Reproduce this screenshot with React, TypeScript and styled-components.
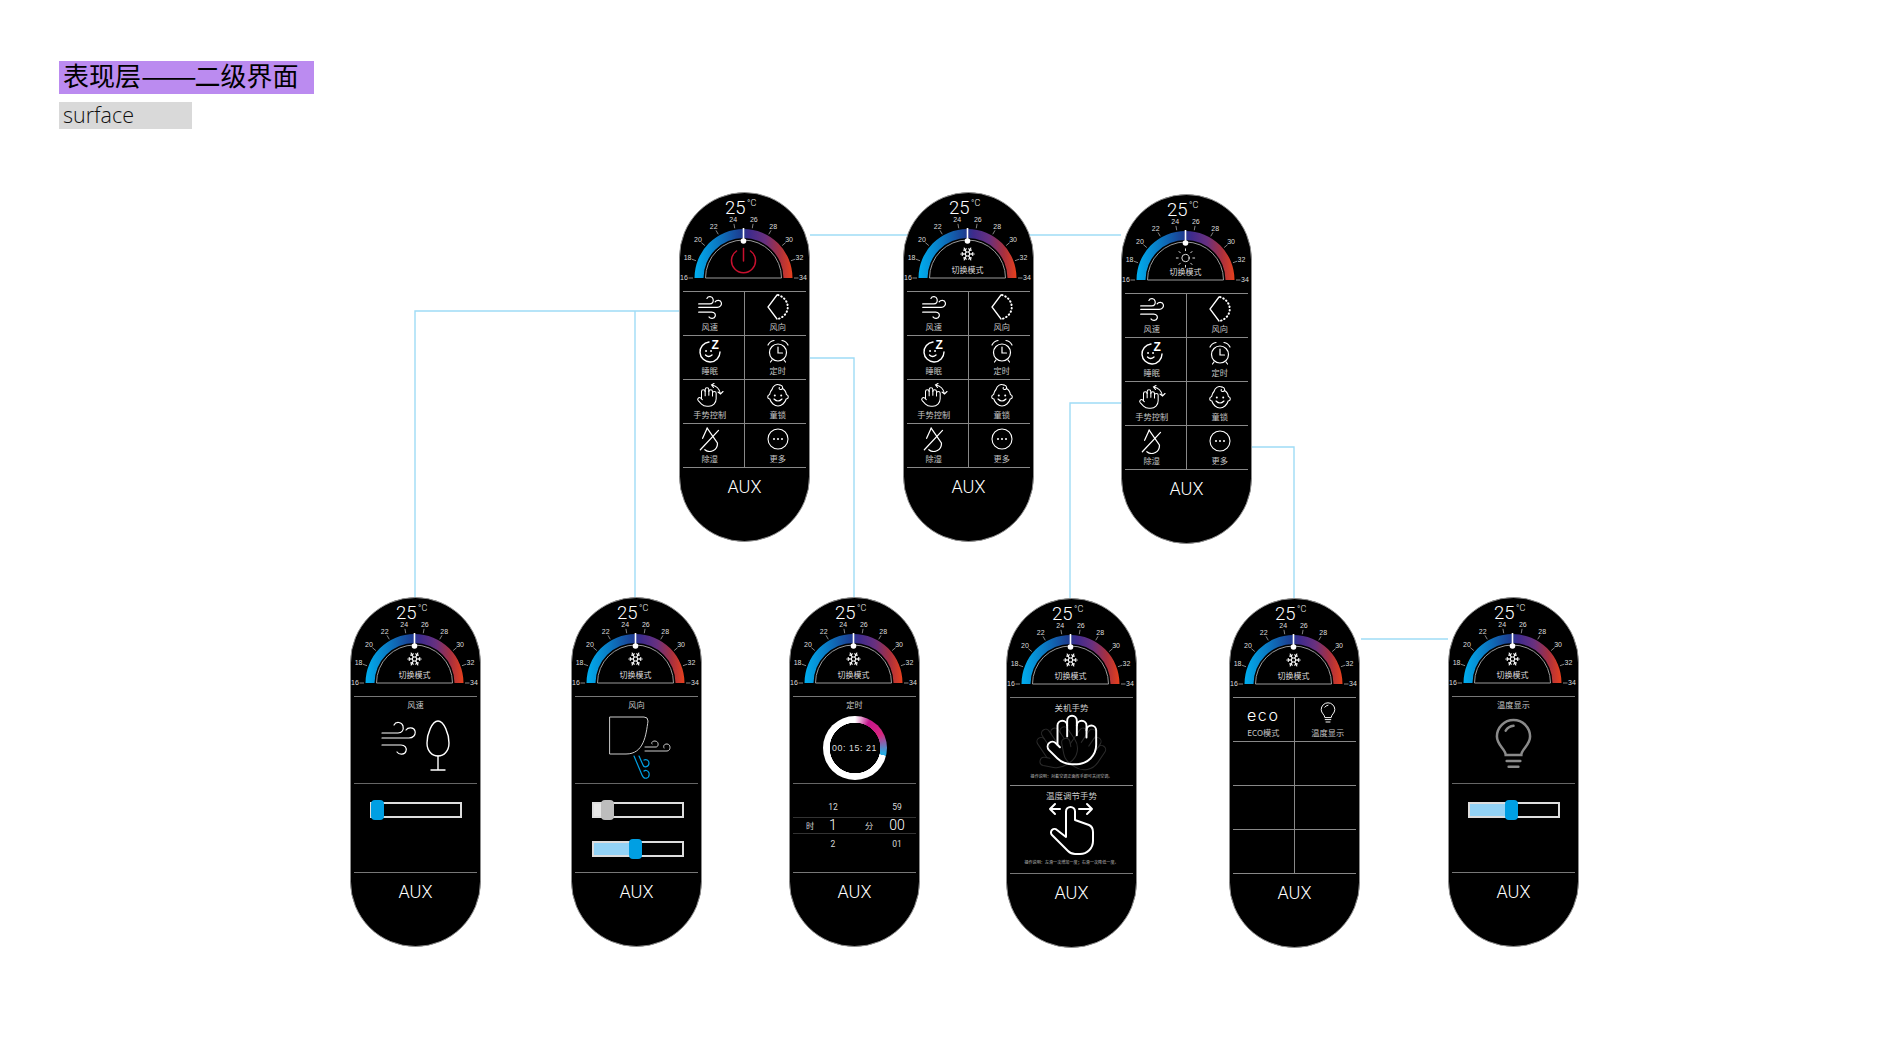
import { FC, ReactNode, useId } from 'react'
import styled, { createGlobalStyle } from 'styled-components'
import { Hand, Snowflake, Sun } from 'lucide-react'

const CJK = `"Noto Sans CJK SC", "Noto Sans", sans-serif`
const HEADER_BOTTOM = 129

const toPolar = (r: number, deg: number) => {
  const rad = (deg * Math.PI) / 180
  return [63.5 + r * Math.cos(rad), 85 - r * Math.sin(rad)]
}

const GaugeCenter: FC<{ mode: 'power' | 'cool' | 'sun' }> = ({ mode }) => {
  if (mode === 'power') {
    return (
      <g fill="none" stroke="#c8102e" strokeWidth="1.5" strokeLinecap="round">
        <path d="M56.5 58 A12 12 0 1 0 70.5 58" />
        <path d="M63.5 55.5 V68" />
      </g>
    )
  }
  return (
    <>
      {mode === 'cool' ? (
        <Snowflake x={55.5} y={53} size={16} color="#fff" strokeWidth={1.7} />
      ) : (
        <Sun x={52.5} y={52} size={22} color="#eee" strokeWidth={1} />
      )}
      <text x="63.5" y="80" textAnchor="middle" fontSize="8" fill="#ddd" fontFamily={CJK}>切换模式</text>
    </>
  )
}

const Gauge: FC<{ mode?: 'power' | 'cool' | 'sun' }> = ({ mode = 'cool' }) => {
  const id = useId()
  const labels = [16, 18, 20, 22, 24, 26, 28, 30, 32, 34]
  return (
    <GaugeSvg viewBox="0 0 129 98">
      <defs>
        <linearGradient id={id} gradientUnits="userSpaceOnUse" x1="14.5" x2="112.5" y1="0" y2="0">
          <stop offset="0" stopColor="#00aeef" />
          <stop offset="0.24" stopColor="#0b78c2" />
          <stop offset="0.47" stopColor="#1c3f92" />
          <stop offset="0.56" stopColor="#3f2b8c" />
          <stop offset="0.72" stopColor="#68307f" />
          <stop offset="0.87" stopColor="#a8303f" />
          <stop offset="1" stopColor="#e8401c" />
        </linearGradient>
      </defs>
      <text x="45" y="20.5" fontSize="18.5" fontWeight="300" fill="#fff" fontFamily="Roboto, sans-serif">25</text>
      <text x="67" y="13" fontSize="9" fontWeight="300" fill="#eee" fontFamily="Roboto, sans-serif">°C</text>
      {labels.map((value, i) => {
        const deg = 180 - i * 20
        const [x1, y1] = toPolar(50.5, deg)
        const [x2, y2] = toPolar(55, deg)
        const [tx, ty] = toPolar(59.5, deg)
        return (
          <g key={value}>
            <line x1={x1} y1={y1} x2={x2} y2={y2} stroke="#bbb" strokeWidth="0.7" />
            <text x={tx} y={ty + 2.4} textAnchor="middle" fontSize="7" fill="#ddd" fontFamily={`"Liberation Sans", sans-serif`}>{value}</text>
          </g>
        )
      })}
      <path d="M14.5 85 A49 49 0 0 1 112.5 85 L103.5 85 A40 40 0 0 0 23.5 85 Z" fill={`url(#${id})`} />
      <path d="M25.5 85 A38 38 0 0 1 101.5 85 Z" fill="none" stroke="#aaa" strokeWidth="0.9" />
      <line x1="63.5" y1="35" x2="63.5" y2="48" stroke="#fff" strokeWidth="1.6" />
      <circle cx="63.5" cy="48" r="2.8" fill="#fff" />
      <GaugeCenter mode={mode} />
    </GaugeSvg>
  )
}

const WindIcon: FC<{ width?: number }> = ({ width = 24 }) => (
  <svg width={width} viewBox="0 0 35 36" fill="none" stroke="#fff" strokeWidth={(35 / width) * 1.2} strokeLinecap="round">
    <path d="M1 13 H17 C21 13 23 10 22 6 C21 2 15 1 13 5" />
    <path d="M1 18 H28 C32 18 35 15 34 11 C33 7 27 7 25 10" />
    <path d="M1 25 H20 C24 25 26 28 25 31 C24 35 18 35 16 32" />
  </svg>
)

const DirectionIcon = () => (
  <svg width="24" height="26" viewBox="0 0 24 26" fill="none" stroke="#fff" strokeWidth="1.3" strokeLinecap="round">
    <path d="M11 1 L2 13 L11 25" />
    <path d="M12 1 C25 5 25 21 12 25" strokeDasharray="0.5 3" strokeWidth="2" />
  </svg>
)

const SleepIcon = () => (
  <svg width="24" height="24" viewBox="0 0 24 24" fill="none" stroke="#fff" strokeWidth="1.4" strokeLinecap="round">
    <path d="M11 3 A10 10 0 1 0 22 13" />
    <path d="M8 12 h0.1 M13 12 h0.1" strokeWidth="1.8" />
    <path d="M7.5 16 Q10.5 19 14 16" />
    <text x="13.5" y="10" fontSize="12" fontWeight="700" fill="#fff" stroke="none" fontFamily={`"Liberation Sans", sans-serif`}>Z</text>
  </svg>
)

const AlarmIcon = () => (
  <svg width="24" height="24" viewBox="0 0 24 24" fill="none" stroke="#fff" strokeWidth="1.2" strokeLinecap="round">
    <circle cx="12" cy="13.5" r="8.5" />
    <path d="M12 8 V14 H16.5" />
    <path d="M2 6 Q4 2 8 1.5 M22 6 Q20 2 16 1.5" />
    <path d="M6 21 L4.5 23 M18 21 L19.5 23" />
  </svg>
)

const GestureIcon = () => (
  <svg width="28" height="25" viewBox="0 0 28 25" fill="none" stroke="#fff" strokeWidth="1.1" strokeLinecap="round">
    <Hand x={0} y={3} size={22} strokeWidth={1.15} color="#fff" />
    <path d="M15.5 2 Q23 3 24.5 11 M18 0.5 L15.5 2 L17.5 4.5 M22 9 L24.5 11 L27 8.5" />
  </svg>
)

const BabyIcon = () => (
  <svg width="24" height="24" viewBox="0 0 24 24" fill="none" stroke="#fff" strokeWidth="1.1" strokeLinecap="round">
    <path d="M14 2 C10 0.5 7 3 6 6.5 C4.5 8 3.8 10 3.6 11.5 C1 12.5 1 15.5 3.8 16 C5 20 8.5 23 12 23 C15.5 23 19 20 20.2 16 C23 15.5 23 12.5 20.4 11.5 C20 9 18.5 6.5 16.5 5.5" />
    <path d="M14 2 C17 2 17.5 6 15 6.5 C13.5 6.8 12.7 5.5 13.3 4.5" />
    <circle cx="8.8" cy="12.5" r="1" fill="#fff" stroke="none" />
    <circle cx="15.2" cy="12.5" r="1" fill="#fff" stroke="none" />
    <path d="M8 16 Q12 20 16 16" />
  </svg>
)

const DehumidifyIcon = () => (
  <svg width="22" height="25" viewBox="0 0 19 22" fill="none" stroke="#fff" strokeWidth="1.1" strokeLinecap="round">
    <path d="M7 1 L3 10" />
    <path d="M7 1 L16 14 A6.8 6.8 0 0 1 5 20" />
    <path d="M17 3 L1 20" />
  </svg>
)

const MoreIcon = () => (
  <svg width="24" height="24" viewBox="0 0 24 24" fill="none" stroke="#fff" strokeWidth="1.1">
    <circle cx="12" cy="12" r="10" />
    <circle cx="8" cy="12" r="1" fill="#fff" stroke="none" />
    <circle cx="12" cy="12" r="1" fill="#fff" stroke="none" />
    <circle cx="16" cy="12" r="1" fill="#fff" stroke="none" />
  </svg>
)

const BulbIcon: FC<{ width: number; color?: string; stroke?: number }> = ({ width, color = '#fff', stroke = 2 }) => (
  <svg width={width} viewBox="0 0 40 56" fill="none" stroke={color} strokeWidth={stroke} strokeLinecap="round">
    <path d="M12 38 C12 32 3 28 3 19 A17 17 0 0 1 37 19 C37 28 28 32 28 38 Z" />
    <path d="M13 44 H27 M15 50 H25" />
    <path d="M12 13 A11 11 0 0 1 20 8" />
  </svg>
)

const TreeIcon = () => (
  <svg width="24" height="51" viewBox="0 0 24 51" fill="none" stroke="#fff" strokeWidth="1.4" strokeLinecap="round">
    <path d="M12 1 C6 1 1 14 1 23 C1 31 6 36 12 36 C18 36 23 31 23 23 C23 14 18 1 12 1 Z" />
    <path d="M12 36 V50 M5 50 H19" />
  </svg>
)

const VaneIcon = () => (
  <svg width="66" height="68" viewBox="0 0 66 68" fill="none" strokeLinecap="round">
    <g stroke="#ccc" strokeWidth="1">
      <path d="M4 4 H38 Q42 4 42 8 C40 22 38 41 20 41 H4 Z" />
      <path d="M39 34 H50 C53 34 53 28 49 28 C46 28 45 30 46 31" />
      <path d="M39 38 H61 C65 38 65 31 61 31 C58 31 57 33 58 35" />
    </g>
    <g stroke="#009fe3" strokeWidth="1.2">
      <path d="M28 43 L36 62 C38 67 44 66 43 60 C42 57 39 57 38 58" />
      <path d="M33 43 L37 52 C38 55 43 54 43 50 C43 47 40 46 38 47" />
    </g>
  </svg>
)

const FaintHand = styled(Hand)<{ $turn: number }>`
  left: 32px;
  position: absolute;
  top: 4px;
  transform: rotate(${({ $turn }) => $turn}deg);
  transform-origin: 50% 100%;
`

const PointerIcon = () => (
  <svg width="47" height="54" viewBox="0 0 47 54" fill="none" stroke="#fff" strokeWidth="2" strokeLinecap="round" strokeLinejoin="round">
    <path d="M18 35 V9.5 A4.5 4.5 0 0 1 27 9.5 V18 L41 23 Q45 25 45 30 V39 A13 13 0 0 1 32 52 H27 Q23 52 20 49 L4 33 A3.5 3.5 0 0 1 9 28 Z" />
    <path d="M12 7 H2 M7 2 L2 7 L7 12" />
    <path d="M31 7 H44 M39 2 L44 7 L39 12" />
  </svg>
)

const EmptyCell = () => <Cell />

const IconCell: FC<{ icon: ReactNode; label: string; plain?: boolean }> = ({ icon, label, plain }) => (
  <Cell $plain={plain}>
    <CellIcon>{icon}</CellIcon>
    <CellLabel>{label}</CellLabel>
  </Cell>
)

const MainMenu = () => (
  <CellGrid>
    <IconCell icon={<WindIcon />} label="风速" />
    <IconCell icon={<DirectionIcon />} label="风向" />
    <IconCell icon={<SleepIcon />} label="睡眠" />
    <IconCell icon={<AlarmIcon />} label="定时" />
    <IconCell icon={<GestureIcon />} label="手势控制" />
    <IconCell icon={<BabyIcon />} label="童锁" />
    <IconCell icon={<DehumidifyIcon />} label="除湿" />
    <IconCell icon={<MoreIcon />} label="更多" />
  </CellGrid>
)

const MoreMenu = () => (
  <CellGrid>
    <IconCell icon={<EcoMark>eco</EcoMark>} label="ECO模式" plain />
    <IconCell icon={<BulbIcon width={16} stroke={2.4} />} label="温度显示" />
    <EmptyCell />
    <EmptyCell />
    <EmptyCell />
    <EmptyCell />
    <EmptyCell />
    <EmptyCell />
  </CellGrid>
)

const Slider: FC<{ at: number; fill?: string; knob?: string }> = ({ at, fill, knob = '#009fe3' }) => (
  <Track>
    {fill && <TrackFill $width={at} $color={fill} />}
    <Knob $at={at} $color={knob} />
  </Track>
)

const SpeedScreen = () => (
  <Panel>
    <TopPane>
      <PaneTitle>风速</PaneTitle>
      <IconRow>
        <WindIcon width={35} />
        <TreeIcon />
      </IconRow>
    </TopPane>
    <SliderPane>
      <Slider at={0} />
    </SliderPane>
  </Panel>
)

const DirectionScreen = () => (
  <Panel>
    <TopPane>
      <PaneTitle>风向</PaneTitle>
      <VaneSlot>
        <VaneIcon />
      </VaneSlot>
    </TopPane>
    <SliderPane $shift={3}>
      <Slider at={8} fill="#e6e6e6" knob="#bdbdbd" />
      <Slider at={36} fill="#93d2f5" />
    </SliderPane>
  </Panel>
)

const PickerLine: FC<{ hour: string; minute: string; active?: boolean }> = ({ hour, minute, active }) => (
  <PickerRow $active={active}>
    <PickerGroup>
      <PickerUnit>{active ? '时' : ''}</PickerUnit>
      <PickerValue $active={active}>{hour}</PickerValue>
    </PickerGroup>
    <PickerGroup $wide>
      <PickerUnit>{active ? '分' : ''}</PickerUnit>
      <PickerValue $active={active}>{minute}</PickerValue>
    </PickerGroup>
  </PickerRow>
)

const TimerScreen = () => (
  <Panel>
    <TopPane>
      <PaneTitle>定时</PaneTitle>
      <TimerRing>00: 15: 21</TimerRing>
    </TopPane>
    <PickerPane>
      <PickerLine hour="12" minute="59" />
      <PickerLine hour="1" minute="00" active />
      <PickerLine hour="2" minute="01" />
    </PickerPane>
  </Panel>
)

const GestureScreen = () => (
  <Panel>
    <GesturePane>
      <GestureTitle>关机手势</GestureTitle>
      <HandStage>
        <FaintHand $turn={-34} size={50} strokeWidth={0.5} color="#2a2a2a" />
        <FaintHand $turn={34} size={50} strokeWidth={0.5} color="#2a2a2a" />
        <FrontHand size={58} strokeWidth={0.8} color="#fff" />
      </HandStage>
      <FinePrint>操作说明：对着空调正面挥手即可关闭空调。</FinePrint>
    </GesturePane>
    <LowerGesturePane>
      <GestureTitle>温度调节手势</GestureTitle>
      <PointerIcon />
      <FinePrint>操作说明：左滑一次增加一度；右滑一次降低一度。</FinePrint>
    </LowerGesturePane>
  </Panel>
)

const DisplayScreen = () => (
  <Panel>
    <TopPane>
      <PaneTitle>温度显示</PaneTitle>
      <BulbSlot>
        <BulbIcon width={39} color="#8a8a8a" stroke={2.6} />
      </BulbSlot>
    </TopPane>
    <SliderPane>
      <Slider at={36} fill="#93d2f5" />
    </SliderPane>
  </Panel>
)

const Phone: FC<{ mode?: 'power' | 'cool' | 'sun'; children: ReactNode }> = ({ mode, children }) => (
  <PhoneBody>
    <Gauge mode={mode} />
    {children}
    <Brand>AUX</Brand>
  </PhoneBody>
)

const nodes = [
  { x: 679, y: 192, mode: 'power' as const, screen: <MainMenu /> },
  { x: 903, y: 192, mode: 'cool' as const, screen: <MainMenu /> },
  { x: 1121, y: 194, mode: 'sun' as const, screen: <MainMenu /> },
  { x: 350, y: 597, mode: 'cool' as const, screen: <SpeedScreen /> },
  { x: 571, y: 597, mode: 'cool' as const, screen: <DirectionScreen /> },
  { x: 789, y: 597, mode: 'cool' as const, screen: <TimerScreen /> },
  { x: 1006, y: 598, mode: 'cool' as const, screen: <GestureScreen /> },
  { x: 1229, y: 598, mode: 'cool' as const, screen: <MoreMenu /> },
  { x: 1448, y: 597, mode: 'cool' as const, screen: <DisplayScreen /> },
]

const links = [
  'M810 235 H1121',
  'M679 311 H415 V598',
  'M635 311 V598',
  'M810 358 H854 V598',
  'M1121 403 H1070 V598',
  'M1252 447 H1294 V598',
  'M1361 639 H1448',
]

export default function App() {
  return (
    <>
      <GlobalStyle />
      <Page>
        <Header>
          <Title>表现层<Dashes>——</Dashes>二级界面</Title>
          <Subtitle>surface</Subtitle>
        </Header>
        <Diagram>
          <Links viewBox={`0 ${HEADER_BOTTOM} 1890 ${1063 - HEADER_BOTTOM}`}>
            {links.map((d) => (
              <path key={d} d={d} fill="none" stroke="#9fdcf6" strokeWidth="1.4" />
            ))}
          </Links>
          {nodes.map((node) => (
            <Node key={node.x} $x={node.x} $y={node.y - HEADER_BOTTOM}>
              <Phone mode={node.mode}>{node.screen}</Phone>
            </Node>
          ))}
        </Diagram>
      </Page>
    </>
  )
}

const GlobalStyle = createGlobalStyle`
  html, body {
    margin: 0;
    padding: 0;
    background: #fff;
  }
  * {
    box-sizing: border-box;
  }
`

const Page = styled.div`
  display: flex;
  flex-direction: column;
  height: 1063px;
  overflow: hidden;
  width: 1890px;
`

const Header = styled.header`
  align-items: flex-start;
  display: flex;
  flex-direction: column;
  gap: 8px;
  padding: 61px 0 0 59px;
`

const Title = styled.h1`
  background: #bb8bf0;
  color: #000;
  font-family: ${CJK};
  font-size: 26px;
  font-weight: 400;
  height: 33px;
  line-height: 28px;
  margin: 0;
  padding-left: 4px;
  white-space: nowrap;
  width: 255px;
`

const Dashes = styled.span`
  display: inline-block;
  margin-right: 10px;
  transform: scaleX(1.28);
  transform-origin: 0 50%;
`

const Subtitle = styled.div`
  background: #d9d9d9;
  color: #111;
  font-family: 'Open Sans', sans-serif;
  font-size: 21.5px;
  font-weight: 300;
  height: 27px;
  line-height: 25px;
  padding-left: 4px;
  width: 133px;
`

const Diagram = styled.main`
  flex: 1;
  position: relative;
`

const Links = styled.svg`
  height: 100%;
  left: 0;
  position: absolute;
  top: 0;
  width: 100%;
`

const Node = styled.div<{ $x: number; $y: number }>`
  left: ${({ $x }) => $x}px;
  position: absolute;
  top: ${({ $y }) => $y}px;
`

const PhoneBody = styled.article`
  background: #000;
  border: 1px solid #8d8d8d;
  border-radius: 66px;
  color: #fff;
  display: flex;
  flex-direction: column;
  height: 350px;
  overflow: hidden;
  width: 131px;
`

const GaugeSvg = styled.svg`
  display: block;
  flex: none;
  height: 98px;
  width: 129px;
`

const Brand = styled.div`
  font-family: Roboto, sans-serif;
  font-size: 18px;
  font-weight: 300;
  line-height: 38px;
  text-align: center;
`

const CellGrid = styled.section`
  border-top: 1px solid #888;
  display: grid;
  flex: none;
  grid-template-columns: 1fr 1fr;
  grid-template-rows: repeat(4, 44px);
  height: 177px;
  margin: 0 3px;
`

const Cell = styled.div<{ $plain?: boolean }>`
  align-items: center;
  border-bottom: 1px solid #888;
  display: flex;
  flex-direction: column;
  justify-content: flex-end;
  padding: 0 0 3px 5px;

  &:nth-child(odd) {
    border-right: 1px solid #888;
    padding: 0 ${({ $plain }) => ($plain ? 0 : 7)}px 3px 0;
  }
`

const CellIcon = styled.div`
  align-items: center;
  display: flex;
  height: 26px;
  justify-content: center;
`

const CellLabel = styled.div`
  color: #c4c4c4;
  font-family: ${CJK};
  font-size: 8.2px;
  line-height: 12px;
  white-space: nowrap;
`

const EcoMark = styled.span`
  color: #fff;
  font-family: Inter, sans-serif;
  font-size: 16px;
  font-weight: 300;
  letter-spacing: 1.6px;
  line-height: 22px;
  padding-top: 3px;
`

const Panel = styled.section`
  border-bottom: 1px solid #777;
  border-top: 1px solid #777;
  display: flex;
  flex: none;
  flex-direction: column;
  height: 177px;
  margin: 0 3px;
`

const TopPane = styled.div`
  align-items: center;
  border-bottom: 1px solid #666;
  display: flex;
  flex: none;
  flex-direction: column;
  height: 87px;
`

const PaneTitle = styled.div`
  color: #c8c8c8;
  font-family: ${CJK};
  font-size: 8.2px;
  line-height: 12px;
  margin-top: 1px;
  white-space: nowrap;
`

const IconRow = styled.div`
  align-items: flex-start;
  display: flex;
  gap: 10px;
  margin-top: 10px;
`

const VaneSlot = styled.div`
  margin: 3px 0 0 5px;
`

const BulbSlot = styled.div`
  margin-top: 8px;
`

const SliderPane = styled.div<{ $shift?: number }>`
  align-items: center;
  display: flex;
  flex: 1;
  flex-direction: column;
  gap: 23px;
  padding: 18px 0 0 ${({ $shift }) => $shift ?? 0}px;
`

const Track = styled.div`
  background: #000;
  border: 2px solid #ddd;
  height: 16px;
  position: relative;
  width: 92px;
`

const TrackFill = styled.div<{ $width: number; $color: string }>`
  background: ${({ $color }) => $color};
  height: 100%;
  width: ${({ $width }) => $width}px;
`

const Knob = styled.div<{ $at: number; $color: string }>`
  background: ${({ $color }) => $color};
  border-radius: 4px;
  height: 20px;
  left: ${({ $at }) => $at - 1}px;
  position: absolute;
  top: -4px;
  width: 13px;
`

const TimerRing = styled.div`
  align-items: center;
  background:
    radial-gradient(circle, #000 25px, transparent 25.5px),
    conic-gradient(#fff 0deg, #c4168d 28deg, #d9267f 62deg, #29abe2 100deg, #29abe2 104deg, #fff 104.5deg);
  border-radius: 50%;
  color: #ddd;
  display: flex;
  font-family: 'Liberation Sans', sans-serif;
  font-size: 8.8px;
  height: 64px;
  justify-content: center;
  letter-spacing: 0.6px;
  margin-top: 6px;
  white-space: nowrap;
  width: 64px;
`

const PickerPane = styled.div`
  display: flex;
  flex: 1;
  flex-direction: column;
  justify-content: center;
  padding-bottom: 6px;
`

const PickerRow = styled.div<{ $active?: boolean }>`
  align-items: center;
  border-color: #333;
  border-style: solid;
  border-width: ${({ $active }) => ($active ? '1px 0' : '0')};
  color: #d8d8d8;
  display: flex;
  font-family: ${CJK};
  font-size: 8px;
  height: ${({ $active }) => ($active ? '17px' : '20px')};
  justify-content: space-between;
  padding-left: 8px;
`

const PickerGroup = styled.div<{ $wide?: boolean }>`
  align-items: center;
  display: grid;
  grid-template-columns: 18px ${({ $wide }) => ($wide ? '38px' : '28px')};
  text-align: center;
`

const PickerUnit = styled.span`
  font-size: 8.2px;
`

const PickerValue = styled.span<{ $active?: boolean }>`
  color: ${({ $active }) => ($active ? '#fff' : '#d8d8d8')};
  font-family: Roboto, sans-serif;
  font-size: ${({ $active }) => ($active ? '14px' : '8.5px')};
  font-weight: ${({ $active }) => ($active ? 300 : 400)};
`

const GesturePane = styled.div`
  align-items: center;
  border-bottom: 1px solid #888;
  display: flex;
  flex: none;
  flex-direction: column;
  height: 88px;
`

const LowerGesturePane = styled(GesturePane)`
  border-bottom: none;
  flex: 1;
  height: auto;
`

const GestureTitle = styled.div`
  color: #ccc;
  font-family: ${CJK};
  font-size: 8.5px;
  line-height: 13px;
  margin-top: 3px;
  white-space: nowrap;
`

const HandStage = styled.div`
  height: 56px;
  position: relative;
  width: 120px;
`

const FrontHand = styled(Hand)`
  left: 31px;
  position: absolute;
  top: -3px;
`

const FinePrint = styled.div`
  color: #bbb;
  font-family: ${CJK};
  font-size: 4.1px;
  line-height: 7px;
  margin-top: 3px;
  white-space: nowrap;
`
